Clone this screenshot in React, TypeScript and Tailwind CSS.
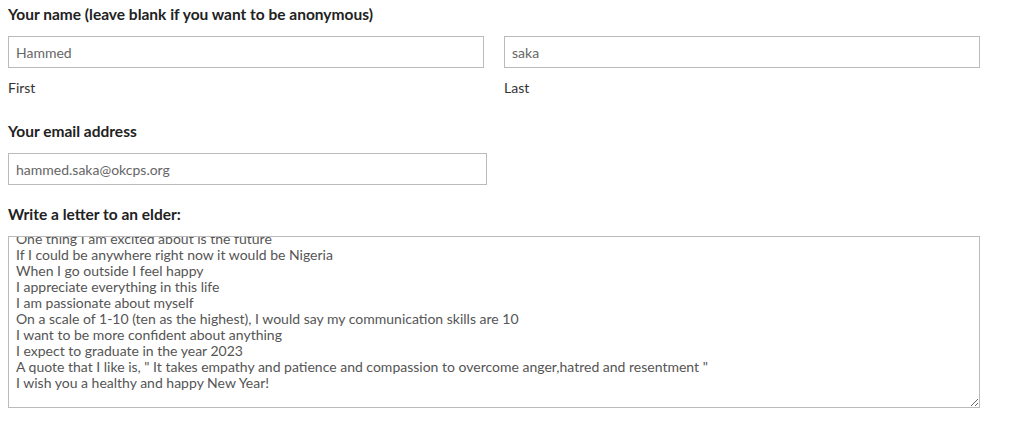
import React, { useEffect, useRef } from 'react';

const letterLines = [
    "Dear Elder,",
    "My name is Hammed Saka",
    "One thing I am excited about is the future",
    "If I could be anywhere right now it would be Nigeria",
    "When I go outside I feel happy",
    "I appreciate everything in this life",
    "I am passionate about myself",
    "On a scale of 1-10 (ten as the highest), I would say my communication skills are 10",
    "I want to be more confident about anything",
    "I expect to graduate in the year 2023",
    "A quote that I like is, \" It takes empathy and patience and compassion to overcome anger,hatred and resentment \"",
    "I wish you a healthy and happy New Year!",
];

const inputClass =
    "h-8 w-full border border-[#bbbbbb] bg-white px-[7px] text-[14px] text-[#666666] outline-none";

const App: React.FC = () => {
    const areaRef = useRef<HTMLTextAreaElement>(null);

    useEffect(() => {
        // scrolled so that "One thing..." is half cut by the top edge
        if (areaRef.current) areaRef.current.scrollTop = 40;
    }, []);

    return (
        <div className="min-h-screen bg-white font-['Lato',sans-serif] text-[#222222]">
            <div className="flex flex-col px-2 pt-[5px]">
                <h3 className="text-[15.5px] font-bold leading-[18px]">
                    Your name (leave blank if you want to be anonymous)
                </h3>
                <div className="mt-[13px] flex gap-5">
                    <div className="flex w-[476px] flex-col">
                        <input className={inputClass} defaultValue="Hammed" />
                        <span className="mt-[12px] text-[14px] leading-[16px] text-[#333333]">First</span>
                    </div>
                    <div className="flex w-[476px] flex-col">
                        <input className={inputClass} defaultValue="saka" />
                        <span className="mt-[12px] text-[14px] leading-[16px] text-[#333333]">Last</span>
                    </div>
                </div>

                <h3 className="mt-[26px] text-[15.5px] font-bold leading-[18px]">Your email address</h3>
                <div className="mt-[13px] w-[479px]">
                    <input className={inputClass} defaultValue="hammed.saka@okcps.org" />
                </div>

                <h3 className="mt-[20px] text-[15.5px] font-bold leading-[18px]">Write a letter to an elder:</h3>
                <textarea
                    ref={areaRef}
                    className="mt-[13px] h-[172px] w-[972px] resize border border-[#bbbbbb] bg-white px-[7px] pt-[2px] pb-4 text-[14px] leading-[16px] text-[#555555] outline-none"
                    defaultValue={letterLines.join("\n")}
                />
            </div>
        </div>
    );
};

export default App;
